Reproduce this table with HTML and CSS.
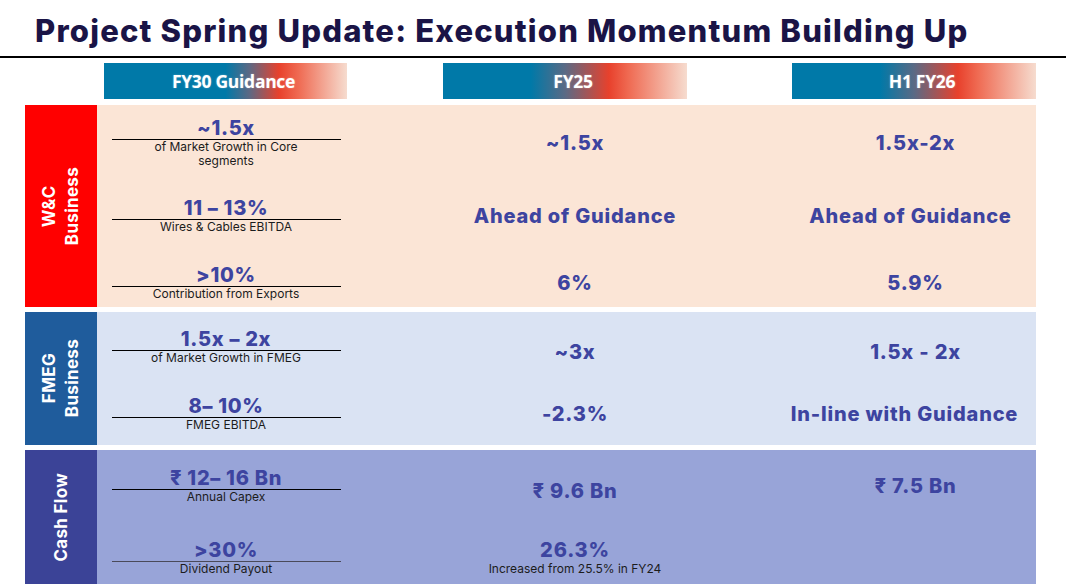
FILE: index.html
```html
<!DOCTYPE html>
<html lang="en">
<head>
<meta charset="utf-8">
<title>Project Spring Update</title>
<link rel="stylesheet" href="styles.css">
</head>
<body>
<div class="page">
  <h1 class="title">Project Spring Update: Execution Momentum Building Up</h1>

  <div class="heads">
    <div class="head head-wide">FY30 Guidance</div>
    <div class="head head-fy25">FY25</div>
    <div class="head head-h1">H1 FY26</div>
  </div>

  <section class="band band-wc">
    <div class="label label-wc"><span>W&amp;C<br>Business</span></div>

    <div class="cell g"><div class="gv">~1.5x</div><div class="gs">of Market Growth in Core<br>segments</div></div>
    <div class="cell v">~1.5x</div>
    <div class="cell v">1.5x-2x</div>

    <div class="cell g"><div class="gv">11 – 13%</div><div class="gs">Wires &amp; Cables EBITDA</div></div>
    <div class="cell v">Ahead of Guidance</div>
    <div class="cell v shift-s">Ahead of Guidance</div>

    <div class="cell g low"><div class="gv">&gt;10%</div><div class="gs">Contribution from Exports</div></div>
    <div class="cell v low">6%</div>
    <div class="cell v low">5.9%</div>
  </section>

  <section class="band band-fmeg">
    <div class="label label-fmeg"><span>FMEG<br>Business</span></div>

    <div class="cell g"><div class="gv">1.5x – 2x</div><div class="gs">of Market Growth in FMEG</div></div>
    <div class="cell v low2">~3x</div>
    <div class="cell v low2">1.5x - 2x</div>

    <div class="cell g"><div class="gv">8– 10%</div><div class="gs">FMEG EBITDA</div></div>
    <div class="cell v">-2.3%</div>
    <div class="cell v shift-l">In-line with Guidance</div>
  </section>

  <section class="band band-cash">
    <div class="label label-cash"><span>Cash Flow</span></div>

    <div class="cell g"><div class="gv">₹ 12– 16 Bn</div><div class="gs">Annual Capex</div></div>
    <div class="cell v low2">₹ 9.6 Bn</div>
    <div class="cell v">₹ 7.5 Bn</div>

    <div class="cell g bottom"><div class="gv gv-grey">&gt;30%</div><div class="gs">Dividend Payout</div></div>
    <div class="cell v bottom"><div>26.3%</div><div class="note">Increased from 25.5% in FY24</div></div>
    <div class="cell v bottom"></div>
  </section>
</div>
</body>
</html>
```

FILE: styles.css
```css
* { box-sizing: border-box; }

html, body {
  margin: 0;
  padding: 0;
  background: #ffffff;
}

.page {
  width: 1066px;
  height: 584px;
  overflow: hidden;
  font-family: Inter, "Noto Sans", sans-serif;
}

.title {
  margin: 0;
  padding: 12px 0 7px 35px;
  font-size: 31px;
  line-height: 37px;
  font-weight: 800;
  color: #1a1446;
  letter-spacing: 1.2px;
  white-space: nowrap;
  border-bottom: 2px solid #000000;
}

.heads {
  display: flex;
  margin-top: 5px;
  padding-left: 104px;
  height: 36px;
}

.head {
  height: 36px;
  width: 244px;
  display: flex;
  align-items: center;
  justify-content: center;
  padding-left: 16px;
  color: #ffffff;
  font-family: "Open Sans", "Liberation Sans", sans-serif;
  font-weight: 700;
  font-size: 17.5px;
  letter-spacing: -0.3px;
  text-shadow: 0 0 2px rgba(255, 255, 255, 0.35);
  background: linear-gradient(90deg, #0079a8 0%, #0079a8 36%, #5a6a85 50%, #e8412c 68%, #ef6a52 76%, #f6dccf 100%);
}

.head-wide {
  width: 243px;
  background: linear-gradient(90deg, #0079a8 0%, #0079a8 50%, #5e6883 60%, #e8412c 72%, #ef6a52 80%, #f6dccf 100%);
}

.head-fy25 { margin-left: 96px; }
.head-h1 { margin-left: 105px; }

.band {
  display: grid;
  grid-template-columns: 72px 258px 440px 241px;
  margin-left: 25px;
  width: 1011px;
}

.band-wc {
  margin-top: 6px;
  background: #fbe5d6;
  grid-template-rows: 75px 72px 55px;
}

.band-fmeg {
  margin-top: 5px;
  background: #dae3f3;
  grid-template-rows: 70px 63px;
}

.band-cash {
  margin-top: 5px;
  background: #98a4d8;
  grid-template-rows: 72px 62px;
}

.label {
  grid-row: 1 / -1;
  grid-column: 1;
  display: flex;
  align-items: center;
  justify-content: center;
  color: #ffffff;
  font-weight: 700;
  font-size: 17px;
  line-height: 23px;
  letter-spacing: 0.3px;
  text-align: center;
}

.label span {
  writing-mode: vertical-rl;
  transform: rotate(180deg);
}

.label-wc { background: #ff0000; }
.label-fmeg { background: #1f5c9c; }
.label-cash { background: #3b4397; }

.cell {
  align-self: center;
  text-align: center;
}

.low { margin-top: 6px; }
.low2 { margin-top: 10px; }
.bottom { align-self: end; margin-bottom: 8px; }
.shift-s { margin-left: -10px; }
.shift-l { margin-left: -22px; }

.g {
  display: flex;
  flex-direction: column;
  align-items: center;
}

.gv {
  width: 229px;
  font-size: 20px;
  line-height: 20px;
  font-weight: 800;
  color: #3d44a0;
  padding-bottom: 1px;
  border-bottom: 1px solid #000000;
  letter-spacing: 0.7px;
}

.gv-grey { border-bottom-color: #4a4a5a; }

.gs {
  font-size: 12px;
  line-height: 14px;
  color: #1c1c1c;
  font-weight: 400;
}

.v {
  font-size: 20px;
  line-height: 24px;
  font-weight: 800;
  color: #3d44a0;
  letter-spacing: 0.8px;
  white-space: nowrap;
}

.note {
  font-size: 12px;
  line-height: 14px;
  font-weight: 400;
  color: #1c1c1c;
  letter-spacing: 0;
}
```
